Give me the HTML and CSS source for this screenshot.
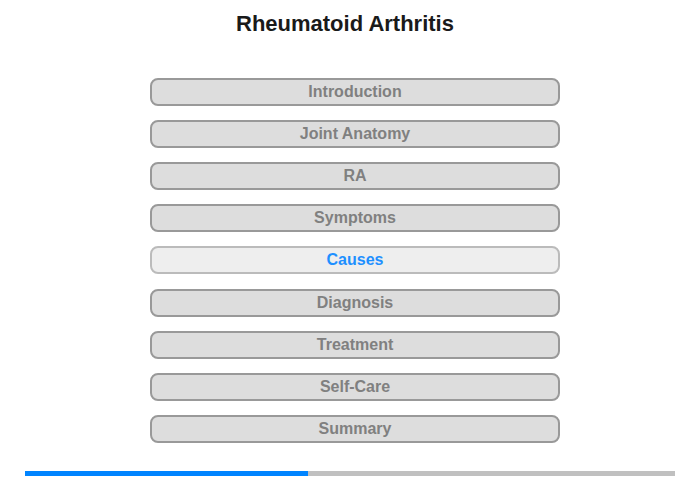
FILE: index.html
```html
<!DOCTYPE html>
<html>
<head>
<meta charset="utf-8">
<link rel="stylesheet" href="styles.css">
</head>
<body>
<div class="page">
  <h1 class="title">Rheumatoid Arthritis</h1>
  <nav class="menu">
    <div class="item">Introduction</div>
    <div class="item">Joint Anatomy</div>
    <div class="item">RA</div>
    <div class="item">Symptoms</div>
    <div class="item active">Causes</div>
    <div class="item">Diagnosis</div>
    <div class="item">Treatment</div>
    <div class="item">Self-Care</div>
    <div class="item">Summary</div>
  </nav>
  <div class="progress"><div class="bar" style="width:283px"></div></div>
</div>
</body>
</html>
```

FILE: styles.css
```css
html, body {
  margin: 0;
  padding: 0;
  background: #fff;
}
.page {
  width: 700px;
  height: 480px;
  font-family: "Liberation Sans", Arial, sans-serif;
  display: flex;
  flex-direction: column;
}
.title {
  margin: 0;
  padding: 11px 10px 0 0;
  font-size: 22px;
  line-height: 25px;
  font-weight: bold;
  color: #1a1a1a;
  text-align: center;
}
.menu {
  display: flex;
  flex-direction: column;
  gap: 14.12px;
  margin: 42px 0 0 150px;
  width: 410px;
}
.item {
  box-sizing: border-box;
  height: 28px;
  border: 2px solid #999;
  border-radius: 8px;
  background: #ddd;
  color: #808080;
  font-size: 16px;
  font-weight: bold;
  line-height: 23px;
  text-align: center;
}
.item.active {
  background: #eee;
  border-color: #bbb;
  color: #1e90ff;
}
.progress {
  margin: 28px 0 0 25px;
  width: 650px;
  height: 5px;
  background: #c0c0c0;
}
.bar {
  height: 100%;
  background: #0084ff;
}
```
